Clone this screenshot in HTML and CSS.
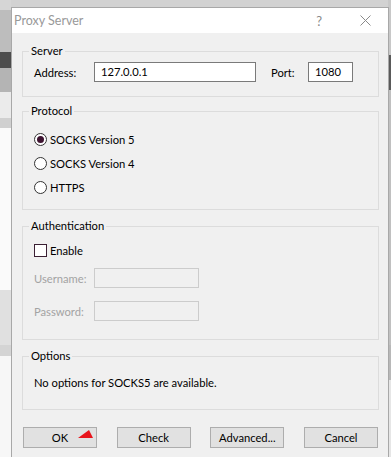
FILE: index.html
```html
<!DOCTYPE html>
<html>
<head>
    <title>Proxy Server</title>
    <link rel="stylesheet" href="styles.css">
</head>
<body>
    <div class="dialog">
        <div class="titlebar">
            <span class="title">Proxy Server</span>
            <span class="help">?</span>
            <span class="close">
                <svg width="11" height="11" viewBox="0 0 11 11"><path d="M0.5 0.5 L10.5 10.5 M10.5 0.5 L0.5 10.5" stroke="#8a8a8a" stroke-width="1" fill="none"/></svg>
            </span>
        </div>
        <div class="content">
            <fieldset class="group group-server">
                <legend>Server</legend>
                <div class="row">
                    <label class="lbl">Address:</label>
                    <div class="field field-address">127.0.0.1</div>
                    <label class="lbl lbl-port">Port:</label>
                    <div class="field field-port">1080</div>
                </div>
            </fieldset>

            <fieldset class="group group-protocol">
                <legend>Protocol</legend>
                <div class="option"><span class="radio checked"></span>SOCKS Version 5</div>
                <div class="option"><span class="radio"></span>SOCKS Version 4</div>
                <div class="option"><span class="radio"></span>HTTPS</div>
            </fieldset>

            <fieldset class="group group-auth">
                <legend>Authentication</legend>
                <div class="check-row"><span class="checkbox"></span>Enable</div>
                <div class="row row-user">
                    <label class="lbl disabled">Username:</label>
                    <div class="field field-disabled"></div>
                </div>
                <div class="row row-pass">
                    <label class="lbl disabled">Password:</label>
                    <div class="field field-disabled"></div>
                </div>
            </fieldset>

            <fieldset class="group group-options">
                <legend>Options</legend>
                <div class="note">No options for SOCKS5 are available.</div>
            </fieldset>

            <div class="buttons">
                <div class="btn btn-ok">OK
                    <svg class="marker" width="16" height="9" viewBox="0 0 16 9"><polygon points="0,8 11,0 15,8" fill="#e8141b"/></svg>
                </div>
                <div class="btn">Check</div>
                <div class="btn">Advanced...</div>
                <div class="btn">Cancel</div>
            </div>
        </div>
    </div>
</body>
</html>
```

FILE: styles.css
```css
html, body {
    margin: 0;
    height: 457px;
    overflow: hidden;
}
body {
    font-family: Lato, "Noto Sans", sans-serif;
    font-size: 11.2px;
    color: #000;
    padding: 7px 0 0 11px;
    box-sizing: border-box;
    background-color: #d2d2d2;
    background-image:
        linear-gradient(to bottom,
            #d6d6d6 0, #d6d6d6 10px,
            #bdbdbd 10px, #bdbdbd 52px,
            #4d4d4d 52px, #4d4d4d 68px,
            #b4b4b4 68px, #b4b4b4 92px,
            #ebebeb 92px, #ebebeb 118px,
            #d0d0d0 118px, #d0d0d0 128px,
            #fafafa 128px, #fafafa 290px,
            #e0e0e0 290px, #e0e0e0 345px,
            #d4d4d4 345px, #d4d4d4 356px,
            #f7f7f7 356px),
        linear-gradient(to bottom,
            #c8c8c8 0, #c8c8c8 55px,
            #5a5a5a 55px, #5a5a5a 90px,
            #c0c0c0 90px, #c0c0c0 345px,
            #b8b8b8 345px, #b8b8b8 380px,
            #e6e6e6 380px);
    background-size: 11px 457px, 3px 457px;
    background-position: left top, right top;
    background-repeat: no-repeat;
}
.dialog {
    width: 378px;
    height: 460px;
    box-sizing: border-box;
    background-color: #f0f0f0;
    border: 1px solid #a8a8a8;
}
.titlebar {
    height: 25px;
    background-color: #fff;
    display: flex;
    align-items: center;
    padding-left: 2px;
}
.title {
    color: #999;
    font-size: 12.5px;
    flex: 1;
}
.help {
    color: #8a8a8a;
    font-size: 13px;
    margin-right: 38px;
}
.close {
    display: flex;
    margin-right: 17px;
}
.content {
    padding: 10px 9px 0 10px;
}
.group {
    margin: 0;
    border: 1px solid #dcdcdc;
    padding: 0 11px 0 11px;
    min-width: 0;
}
.group legend {
    line-height: 16px;
    padding: 0 2px;
    margin-left: -5px;
}
.group-server {
    padding-top: 3px;
    padding-bottom: 14px;
}
.group-protocol {
    margin-top: 6px;
    padding-top: 8px;
    padding-bottom: 10px;
}
.group-auth {
    margin-top: 8px;
    padding-top: 7px;
    padding-bottom: 18px;
}
.group-options {
    margin-top: 8px;
    padding-top: 11px;
    padding-bottom: 18px;
}
.row {
    display: flex;
    align-items: center;
}
.lbl {
    width: 60px;
    flex-shrink: 0;
    white-space: nowrap;
}
.lbl-port {
    width: 37px;
    margin-left: 15px;
}
.disabled {
    color: #a3a3a3;
}
.field {
    height: 20px;
    box-sizing: border-box;
    border: 1px solid #7a7a7a;
    background-color: #fff;
    padding-left: 6px;
    line-height: 18px;
    flex-shrink: 0;
}
.field-address {
    width: 162px;
}
.field-port {
    width: 45px;
}
.field-disabled {
    width: 105px;
    border-color: #cccccc;
    background-color: #f0f0f0;
}
.row-user {
    margin-top: 9px;
}
.row-pass {
    margin-top: 13px;
}
.option {
    display: flex;
    align-items: center;
    height: 24px;
}
.radio {
    width: 13px;
    height: 13px;
    box-sizing: border-box;
    border: 1px solid #333;
    border-radius: 50%;
    background-color: #fff;
    margin-right: 3px;
    display: flex;
    align-items: center;
    justify-content: center;
}
.radio.checked::after {
    content: "";
    width: 7px;
    height: 7px;
    border-radius: 50%;
    background-color: #3d1330;
}
.check-row {
    display: flex;
    align-items: center;
    height: 18px;
}
.checkbox {
    width: 13px;
    height: 13px;
    box-sizing: border-box;
    border: 1px solid #3a1f33;
    background-color: #fff;
    margin-right: 3px;
}
.note {
    line-height: 16px;
}
.buttons {
    display: flex;
    justify-content: space-between;
    margin-top: 17px;
    padding: 0 1px 0 1px;
}
.btn {
    position: relative;
    width: 74px;
    height: 21px;
    box-sizing: border-box;
    border: 1px solid #adadad;
    background-color: #e1e1e1;
    text-align: center;
    line-height: 19px;
}
.marker {
    position: absolute;
    left: 54px;
    top: 2px;
}
```
